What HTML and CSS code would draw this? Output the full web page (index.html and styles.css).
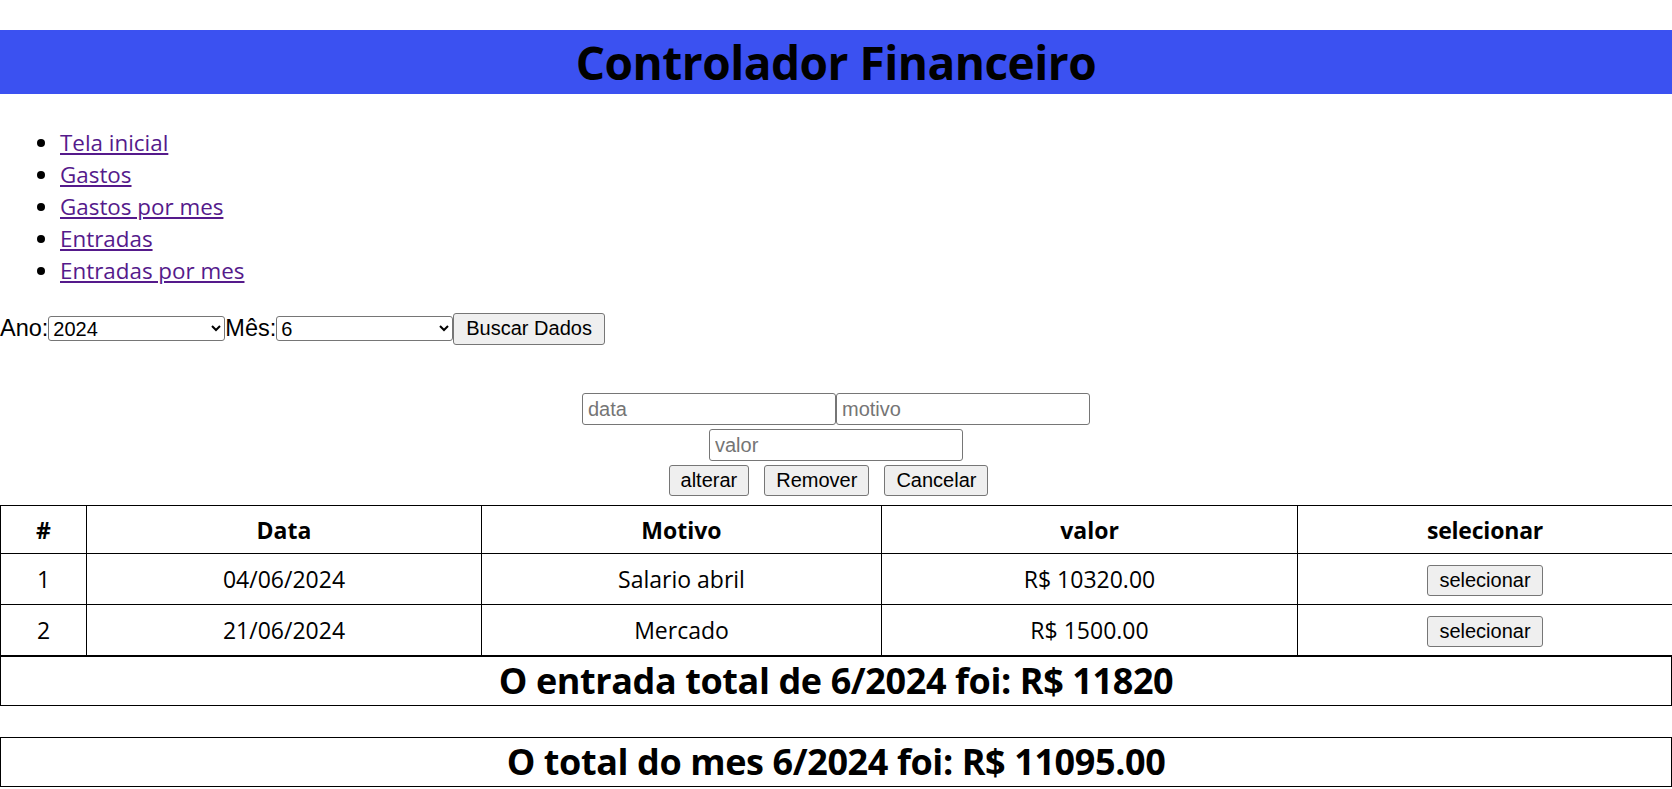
FILE: index.html
```html
<!DOCTYPE html>
<html lang="pt-BR">
<head>
<meta charset="utf-8">
<title>Controlador Financeiro</title>
<link rel="stylesheet" href="styles.css">
</head>
<body>
<h1 class="title">Controlador Financeiro</h1>
<ul class="nav">
  <li><a href="#">Tela inicial</a></li>
  <li><a href="#">Gastos</a></li>
  <li><a href="#">Gastos por mes</a></li>
  <li><a href="#">Entradas</a></li>
  <li><a href="#">Entradas por mes</a></li>
</ul>
<div class="filters">
  <label class="lbl">Ano:</label>
  <select class="sel"><option>2024</option></select>
  <label class="lbl">Mês:</label>
  <select class="sel"><option>6</option></select>
  <button class="btn big">Buscar Dados</button>
</div>
<div class="editor">
  <div class="erow">
    <input class="inp" type="text" placeholder="data">
    <input class="inp" type="text" placeholder="motivo">
  </div>
  <div class="erow">
    <input class="inp" type="text" placeholder="valor">
  </div>
  <div class="erow gap">
    <button class="btn">alterar</button>
    <button class="btn">Remover</button>
    <button class="btn">Cancelar</button>
  </div>
</div>
<table class="grid">
  <colgroup>
    <col class="c1"><col class="c2"><col class="c3"><col class="c4"><col class="c5">
  </colgroup>
  <thead>
    <tr><th>#</th><th>Data</th><th>Motivo</th><th>valor</th><th>selecionar</th></tr>
  </thead>
  <tbody>
    <tr><td>1</td><td>04/06/2024</td><td>Salario abril</td><td>R$ 10320.00</td><td><button class="btn">selecionar</button></td></tr>
    <tr><td>2</td><td>21/06/2024</td><td>Mercado</td><td>R$ 1500.00</td><td><button class="btn">selecionar</button></td></tr>
  </tbody>
</table>
<div class="total">O entrada total de 6/2024 foi: R$ 11820</div>
<div class="total second">O total do mes 6/2024 foi: R$ 11095.00</div>
</body>
</html>
```
FILE: styles.css
```css
body {
  margin: 0;
  font-family: "Open Sans", "Noto Sans", sans-serif;
  color: #000;
  background: #fff;
}
.title {
  margin: 30px 0 0 0;
  height: 64px;
  line-height: 64px;
  background: #3b51f1;
  text-align: center;
  font-size: 46px;
  font-weight: 700;
  letter-spacing: -0.5px;
}
.nav {
  margin: 33px 0 0 0;
  padding-left: 60px;
  font-size: 22.4px;
  line-height: 32px;
}
.nav a {
  color: #551a8b;
}
.filters {
  margin-top: 25px;
  height: 33px;
  display: flex;
  align-items: center;
  font-family: "Liberation Sans", Arial, sans-serif;
}
.lbl {
  font-size: 23.5px;
}
.sel {
  width: 177px;
  height: 25px;
  font-family: "Liberation Sans", Arial, sans-serif;
  font-size: 20px;
  border: 1px solid #767676;
  border-radius: 3px;
  background: #fff;
  color: #000;
}
.btn {
  font-family: "Liberation Sans", Arial, sans-serif;
  font-size: 20px;
  height: 31px;
  padding: 0 11px;
  border: 1px solid #767676;
  border-radius: 3px;
  background: #efefef;
  color: #000;
}
.btn.big {
  height: 32px;
  padding: 0 12px;
}
.editor {
  margin-top: 48px;
  display: flex;
  flex-direction: column;
  align-items: center;
  gap: 4px;
}
.erow {
  display: flex;
  justify-content: center;
}
.erow.gap {
  gap: 15px;
  padding-right: 15px;
}
.inp {
  box-sizing: border-box;
  width: 254px;
  height: 32px;
  margin: 0;
  padding: 1px 5px;
  font-family: "Liberation Sans", Arial, sans-serif;
  font-size: 20px;
  border: 1px solid #767676;
  border-radius: 3px;
}
.inp::placeholder {
  color: #757575;
}
.grid {
  margin-top: 9px;
  width: 100%;
  table-layout: fixed;
  border-collapse: collapse;
  font-size: 23px;
  text-align: center;
}
.c1 { width: 86px; }
.c2 { width: 395px; }
.c3 { width: 400px; }
.c4 { width: 416px; }
.c5 { width: 375px; }
.grid th, .grid td {
  border: 1px solid #000;
  padding: 0;
}
.grid th {
  height: 47px;
  font-weight: 700;
}
.grid th:last-child {
  letter-spacing: -0.2px;
}
.grid td {
  height: 50px;
}
.total {
  box-sizing: border-box;
  height: 50px;
  line-height: 48px;
  border: 1px solid #000;
  text-align: center;
  font-size: 36px;
  font-weight: 700;
  letter-spacing: -0.4px;
}
.total.second {
  margin-top: 31px;
}
```
